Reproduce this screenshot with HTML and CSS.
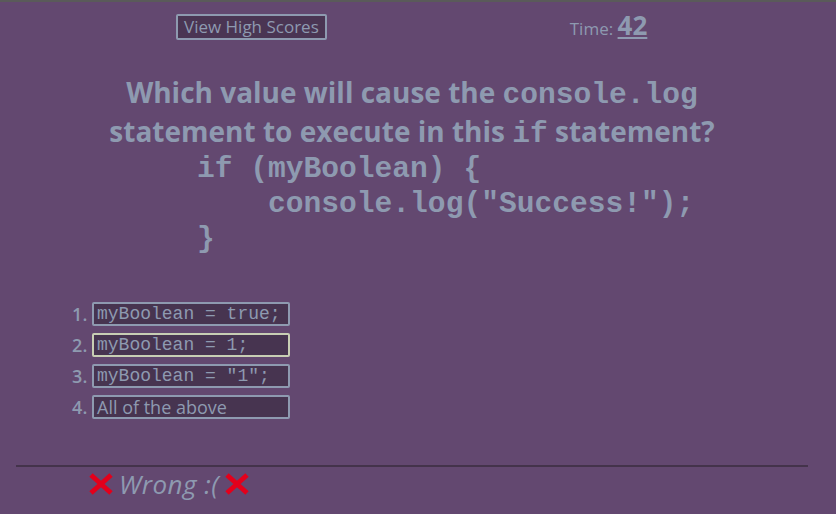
FILE: index.html
```html
<!DOCTYPE html>
<html>
<head>
<meta charset="utf-8">
<link rel="stylesheet" href="styles.css">
</head>
<body>
<div class="page">
  <header class="topbar">
    <button class="scores-btn">View High Scores</button>
    <div class="timer">Time: <span class="time-val">42</span></div>
  </header>
  <main class="quiz">
    <h1 class="question">Which value will cause the <code>console.log</code> statement to execute in this <code>if</code> statement?</h1>
    <pre class="snippet">if (myBoolean) {
    console.log("Success!");
}</pre>
    <ol class="choices">
      <li><button class="choice mono">myBoolean = true;</button></li>
      <li><button class="choice mono focused">myBoolean = 1;</button></li>
      <li><button class="choice mono">myBoolean = "1";</button></li>
      <li><button class="choice">All of the above</button></li>
    </ol>
  </main>
  <footer class="result">
    <svg class="xmark" viewBox="0 0 26 24" width="26" height="24"><path d="M3 3 L23 21 M23 3 L3 21" stroke="#e3001b" stroke-width="5" stroke-linecap="butt"/></svg>
    <span class="result-text">Wrong :(</span>
    <svg class="xmark" viewBox="0 0 26 24" width="26" height="24"><path d="M3 3 L23 21 M23 3 L3 21" stroke="#e3001b" stroke-width="5" stroke-linecap="butt"/></svg>
  </footer>
</div>
</body>
</html>
```
FILE: styles.css
```css
html, body {
  margin: 0;
  padding: 0;
}
body {
  background: #634870;
  border-top: 2px solid #5a5a5a;
  height: 512px;
  overflow: hidden;
  font-family: "Open Sans", "Noto Sans", sans-serif;
  color: #8e9ab0;
}
.page {
  margin: 0 28px 0 16px;
}
.topbar {
  display: flex;
  align-items: flex-start;
  height: 48px;
}
.scores-btn {
  margin-left: 160px;
  margin-top: 12px;
  font-family: inherit;
  font-size: 17px;
  color: #8e9ab0;
  background: #4a3553;
  border: 2px solid #8e9ab0;
  border-radius: 2px;
  padding: 0 6px;
  height: 26px;
  line-height: 20px;
}
.timer {
  margin-left: 243px;
  font-size: 17px;
  margin-top: 8px;
  line-height: 30px;
}
.time-val {
  font-size: 26px;
  font-weight: bold;
  text-decoration: underline;
}
.quiz {
  margin-top: 24px;
}
.question {
  margin: 0 auto;
  width: 640px;
  text-align: center;
  font-size: 28px;
  font-weight: bold;
  line-height: 36px;
}
.question code, .snippet {
  font-family: "Liberation Mono", "Courier New", monospace;
  font-size: 29.6px;
}
.snippet {
  margin: 0 0 0 181px;
  font-weight: bold;
  line-height: 35px;
}
.choices {
  margin: 45px 0 0 0;
  padding-left: 76px;
  font-size: 18px;
  font-weight: 600;
}
.choices li {
  height: 31px;
}
.choices li::marker {
  color: #8e9ab0;
}
.choice {
  width: 198px;
  height: 24px;
  text-align: left;
  padding: 0 3px;
  background: #473450;
  color: #8e9ab0;
  border: 2px solid #8e9ab0;
  border-radius: 2px;
  font-family: "Open Sans", "Noto Sans", sans-serif;
  font-size: 18px;
  line-height: 20px;
  vertical-align: top;
  white-space: nowrap;
  overflow: hidden;
}
.choice.mono {
  font-family: "Liberation Mono", "Courier New", monospace;
  font-size: 18px;
  font-weight: normal;
}
.choice.focused {
  border-color: #c8ceb4;
}
.result {
  margin-top: 39px;
  border-top: 2px solid #44334b;
  display: flex;
  align-items: center;
  gap: 5px;
  padding-left: 72px;
  padding-top: 3px;
}
.result-text {
  font-style: italic;
  font-size: 26px;
  line-height: 28px;
  letter-spacing: 0.5px;
}
```
